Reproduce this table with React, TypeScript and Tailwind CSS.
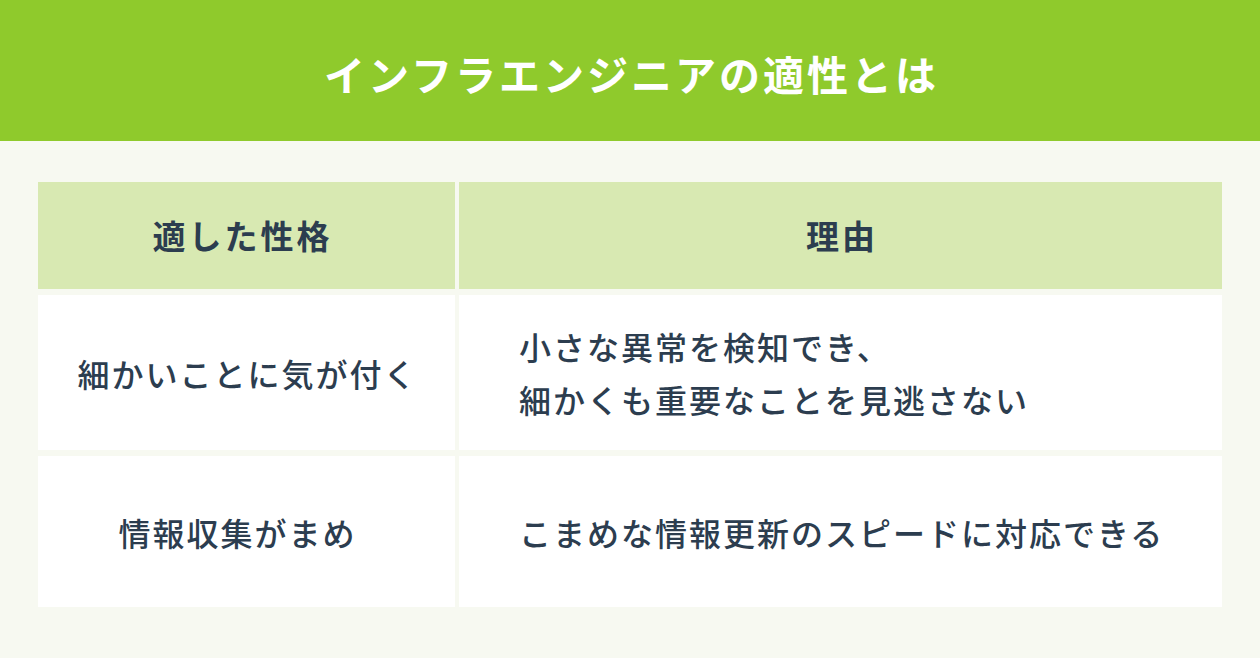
import React from "react";

const font = { fontFamily: '"Noto Sans CJK JP", "Noto Sans", sans-serif' };

export default function App() {
  return (
    <div className="w-[1260px] h-[658px] bg-[#f7f9f1] overflow-hidden" style={font}>
      <header className="h-[141px] bg-[#8fca2c] flex items-center justify-center pt-[6px]">
        <h1 className="text-white text-[41px] font-bold tracking-[3px] leading-none pl-[3px]">
          インフラエンジニアの適性とは
        </h1>
      </header>
      <div className="pt-[41px] px-[38px]">
        <div className="grid grid-cols-[417px_763px] gap-x-[4px] gap-y-[6px] text-[#2c3d4f]">
          <div className="h-[107px] bg-[#d8e9b2] flex items-center justify-center text-[33px] font-bold tracking-[3px] pr-[8px]">
            適した性格
          </div>
          <div className="h-[107px] bg-[#d8e9b2] flex items-center justify-center text-[33px] font-bold tracking-[3px] pl-[3px]">
            理由
          </div>
          <div className="h-[155px] bg-white flex items-center justify-center text-[32px] font-medium tracking-[2px] pl-[2px]">
            細かいことに気が付く
          </div>
          <div className="h-[155px] bg-white flex flex-col justify-center pl-[60px] text-[32px] font-medium tracking-[2px] leading-[53px]">
            <span>小さな異常を検知でき、</span>
            <span>細かくも重要なことを見逃さない</span>
          </div>
          <div className="h-[151px] bg-white flex items-center justify-center text-[32px] font-medium tracking-[2px] pr-[18px]">
            情報収集がまめ
          </div>
          <div className="h-[151px] bg-white flex items-center pl-[60px] text-[32px] font-medium tracking-[2px]">
            こまめな情報更新のスピードに対応できる
          </div>
        </div>
      </div>
    </div>
  );
}
